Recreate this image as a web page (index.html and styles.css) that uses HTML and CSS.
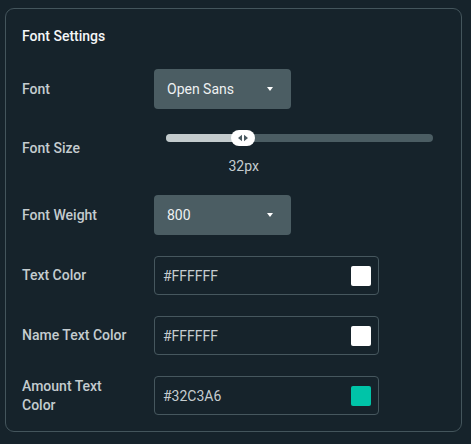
FILE: index.html
```html
<!DOCTYPE html>
<html>
<head>
<meta charset="utf-8">
<link rel="stylesheet" href="styles.css">
</head>
<body>
<section class="card">
  <h2 class="title">Font Settings</h2>
  <div class="rows">
    <div class="row">
      <span class="label">Font</span>
      <div class="select"><span>Open Sans</span><span class="caret"></span></div>
    </div>
    <div class="row row-slider">
      <span class="label">Font Size</span>
      <div class="slider">
        <div class="track">
          <div class="fill" style="width:29%"></div>
          <div class="thumb" style="left:29%">
            <svg width="12" height="8" viewBox="0 0 12 8"><path d="M5 0.8 L1 4 L5 7.2 Z M7 0.8 L11 4 L7 7.2 Z" fill="#4a5a61"/></svg>
          </div>
        </div>
        <div class="value" style="padding-left:29%"><span>32px</span></div>
      </div>
    </div>
    <div class="row">
      <span class="label">Font Weight</span>
      <div class="select"><span>800</span><span class="caret"></span></div>
    </div>
    <div class="row">
      <span class="label">Text Color</span>
      <div class="color-input"><span>#FFFFFF</span><span class="swatch swatch-white"></span></div>
    </div>
    <div class="row">
      <span class="label">Name Text Color</span>
      <div class="color-input"><span>#FFFFFF</span><span class="swatch swatch-white"></span></div>
    </div>
    <div class="row">
      <span class="label">Amount Text Color</span>
      <div class="color-input"><span>#32C3A6</span><span class="swatch swatch-teal"></span></div>
    </div>
  </div>
</section>
</body>
</html>
```

FILE: styles.css
```css
html, body {
  background: #16232b;
}
body {
  margin: 8px 9px 0 5px;
  font-family: Roboto, "Liberation Sans", sans-serif;
  color: #c8d0d3;
}
.card {
  border: 1px solid #44555c;
  border-radius: 9px;
  padding: 19px 16px 18px 16px;
  height: 424px;
  box-sizing: border-box;
}
.title {
  margin: 0 0 24px 0;
  font-size: 14px;
  font-weight: 500;
  line-height: 17px;
  color: #f4f6f7;
}
.rows {
  display: flex;
  flex-direction: column;
  gap: 21px;
}
.row {
  display: flex;
  align-items: center;
}
.label {
  width: 112px;
  margin-right: 20px;
  font-size: 14px;
  font-weight: 500;
  line-height: 19px;
  color: #c4cccf;
}
.select {
  width: 137px;
  height: 40px;
  box-sizing: border-box;
  background: #4b5d63;
  border-radius: 4px;
  padding: 0 18px 0 13px;
  display: flex;
  align-items: center;
  justify-content: space-between;
  font-size: 14px;
  color: #eef1f2;
}
.caret {
  width: 0;
  height: 0;
  border-left: 3.5px solid transparent;
  border-right: 3.5px solid transparent;
  border-top: 4px solid #ffffff;
}
.row-slider {
  align-items: flex-start;
}
.row-slider .label {
  margin-top: 9px;
}
.slider {
  flex: 1;
  padding: 0 12px 0 12px;
}
.track {
  position: relative;
  height: 8px;
  margin-top: 4px;
  border-radius: 4px;
  background: #4b5d63;
}
.fill {
  height: 8px;
  border-radius: 4px 0 0 4px;
  background: #c3cbcd;
}
.thumb {
  position: absolute;
  top: -4px;
  width: 24px;
  height: 16px;
  margin-left: -12px;
  border-radius: 8px;
  background: #ffffff;
  display: flex;
  align-items: center;
  justify-content: center;
}
.value {
  margin-top: 16px;
  font-size: 14px;
  line-height: 16px;
  color: #c4cccf;
}
.value span {
  display: inline-block;
  margin-left: -15px;
}
.color-input {
  width: 225px;
  height: 39px;
  box-sizing: border-box;
  border: 1px solid #46575e;
  border-radius: 4px;
  padding: 0 7px 0 8px;
  display: flex;
  align-items: center;
  justify-content: space-between;
  font-size: 14px;
  color: #c6cdd0;
}
.swatch {
  width: 20px;
  height: 20px;
  border-radius: 2px;
}
.swatch-white {
  background: #ffffff;
}
.swatch-teal {
  background: #00c4a8;
}
```
